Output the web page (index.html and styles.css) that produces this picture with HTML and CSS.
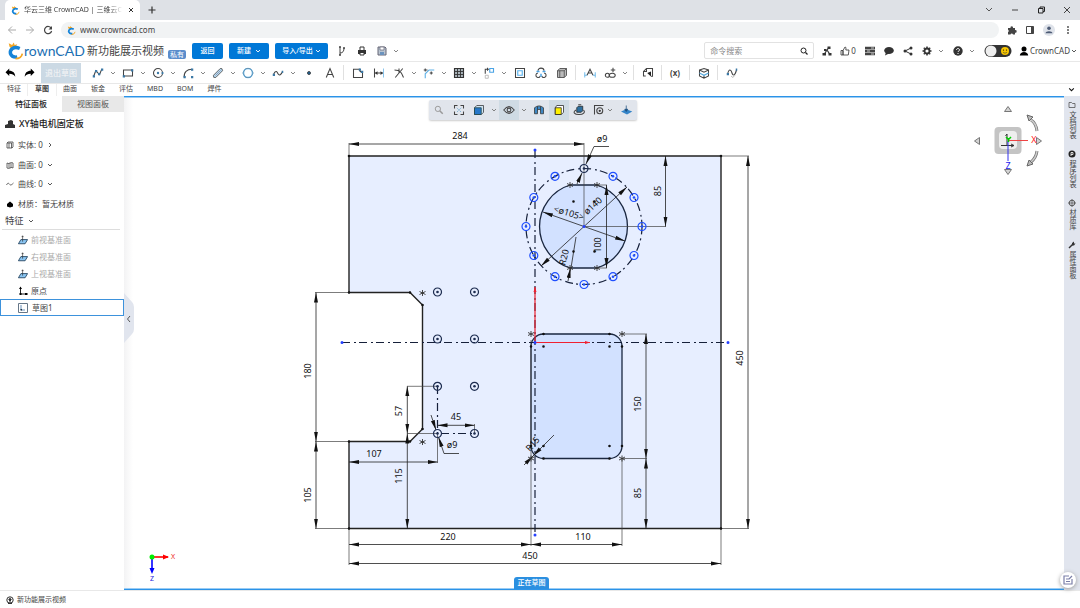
FILE: index.html
```html
<!DOCTYPE html>
<html lang="zh-CN">
<head>
<meta charset="utf-8">
<title>华云三维 CrownCAD</title>
<link rel="stylesheet" href="styles.css">
</head>
<body>
<svg class="defs" aria-hidden="true">
  <symbol id="chev" viewBox="0 0 6 6"><path d="M1 2l2 2 2-2" fill="none" stroke="currentColor" stroke-width=".9"/></symbol>
  <symbol id="brand" viewBox="0 0 20 20"><path d="M3 5L2 1l4 2 2-3 1 3 3-1-2 4-5 1z" fill="#f5a623"/><path d="M15 7C8 4 3 8 4 13q2 5 8 4" fill="none" stroke="#1684d8" stroke-width="4"/><path d="M18 13q-1 6-8 6" fill="none" stroke="#f5a623" stroke-width="2"/></symbol>
  <symbol id="plane" viewBox="0 0 12 12"><path d="M3.500 5.500H11.500L8.500 10.500H.5z" fill="#8ac5f2" stroke="#1d3c58"/><path d="M5.500 8V1M4.500 2.500l1-1.500 1 1.500" fill="none" stroke="#333" stroke-width=".8"/></symbol>
  <symbol id="ring" viewBox="-5 -5 10 10" overflow="visible"><circle r="4" fill="none" stroke="currentColor" stroke-width="1.200"/><circle r="1.300" fill="currentColor"/></symbol>
  <symbol id="star" viewBox="-4 -4 8 8" overflow="visible"><path d="M0-3V3M-3-1.500L3 1.500M-3 1.500L3-1.500" stroke="#333" fill="none" stroke-width=".9"/></symbol>
</svg>

<div class="tabstrip">
  <div class="browser-tab">
    <svg class="fav"><use href="#brand"/></svg>
    <span class="tab-title">华云三维 CrownCAD | 三维云C</span>
    <button class="bare" aria-label="关闭标签页"><svg class="i8" viewBox="0 0 8 8"><path d="M2 2l4 4M6 2L2 6" stroke="#333"/></svg></button>
  </div>
  <button class="bare" aria-label="新标签页"><svg class="i10" viewBox="0 0 10 10"><path d="M5 1.500v7M1.500 5h7" stroke="#333" stroke-width="1.200"/></svg></button>
  <div class="window-controls">
    <button class="bare" aria-label="标签搜索"><svg class="i10" viewBox="0 0 10 10"><path d="M2 3l3 3 3-3" fill="none" stroke="#555"/></svg></button>
    <button class="bare" aria-label="最小化"><svg class="i10" viewBox="0 0 10 10"><path d="M2 5h6" stroke="#444"/></svg></button>
    <button class="bare" aria-label="还原"><svg class="i10" viewBox="0 0 10 10"><path d="M2.500 3.500h4.500v4.500H2.500zM4 3.500V2h4.500v4.500H7" fill="none" stroke="#222"/></svg></button>
    <button class="bare" aria-label="关闭"><svg class="i10" viewBox="0 0 10 10"><path d="M2 2l6 6M8 2L2 8" stroke="#444"/></svg></button>
  </div>
</div>

<div class="address-row">
  <button class="bare" aria-label="后退"><svg class="i10" viewBox="0 0 10 10"><path d="M9 5H1.500M5 1.500L1.500 5 5 8.500" fill="none" stroke="#aaa"/></svg></button>
  <button class="bare" aria-label="前进"><svg class="i10" viewBox="0 0 10 10"><path d="M1 5h7.500M5 1.500L8.500 5 5 8.500" fill="none" stroke="#aaa"/></svg></button>
  <button class="bare" aria-label="刷新"><svg class="i10" viewBox="0 0 10 10"><path d="M8.200 3.200A3.600 3.600 0 1 0 8.600 6" fill="none" stroke="#444" stroke-width="1.200"/><path d="M9 1v3.500H5.500z" fill="#444"/></svg></button>
  <div class="omnibox"><svg class="fav"><use href="#brand"/></svg><input class="url" aria-label="地址" value="www.crowncad.com"></div>
  <div class="browser-actions">
    <button class="bare" aria-label="扩展程序"><svg class="i10" viewBox="0 0 10 10"><path d="M1 3h2.500a1.300 1.300 0 1 1 2.500 0H8v2.200a1.300 1.300 0 1 1 0 2.500V9.500H6a1.300 1.300 0 0 0-2.500 0H1V7a1.200 1.200 0 0 0 0-2.200z" fill="#444"/></svg></button>
    <button class="bare" aria-label="侧边栏"><svg class="i10" viewBox="0 0 10 10"><path d="M1.500 1.500h7v7h-7z" fill="none" stroke="#444"/><path d="M6 1.500h2.500v7H6z" fill="#444"/></svg></button>
    <button class="bare" aria-label="个人资料"><svg class="i12" viewBox="0 0 12 12"><circle cx="6" cy="6" r="6" fill="#dfe3ea"/><circle cx="6" cy="4.300" r="1.800" fill="#4d5b75"/><path d="M2.500 9.300C2.500 6.500 9.500 6.500 9.500 9.300z" fill="#4d5b75"/></svg></button>
    <button class="bare" aria-label="更多"><svg class="i10" viewBox="0 0 10 10"><g fill="#444"><circle cx="5" cy="2" r=".9"/><circle cx="5" cy="5" r=".9"/><circle cx="5" cy="8" r=".9"/></g></svg></button>
  </div>
</div>

<header class="app-header">
  <a class="logo" href="#"><svg class="logo-mark"><use href="#brand"/></svg><span>rownCAD</span></a>
  <h1 class="doc-title">新功能展示视频</h1><span class="badge">私有</span>
  <div class="header-buttons">
    <button class="primary">返回</button>
    <button class="primary second">新建<svg class="chev"><use href="#chev"/></svg></button>
    <button class="primary third">导入/导出<svg class="chev"><use href="#chev"/></svg></button>
  </div>
  <div class="file-tools">
    <button class="bare" aria-label="分支"><svg class="i10" viewBox="0 0 10 10"><path d="M3 1v8M3 7c3 0 4-2 4-5" fill="none" stroke="#444"/><path d="M2 1h2M6 2h2M2 9h2" stroke="#444" stroke-width="1.500"/></svg></button>
    <button class="bare" aria-label="打印"><svg class="i10" viewBox="0 0 10 10"><path d="M3 4V1h4v3" fill="none" stroke="#333"/><path d="M1 4h8v4H1z" fill="#333"/><path d="M3 6.500h4V9H3z" fill="#fff" stroke="#333"/></svg></button>
    <button class="bare with-chev" aria-label="保存"><svg class="i10" viewBox="0 0 10 10"><path d="M1 1h7l1 1v7H1z" fill="#b9c4d0" stroke="#667"/><path d="M3 1h4v3H3z" fill="#fff" stroke="#667" stroke-width=".7"/><path d="M3 6h4v3H3z" fill="#6b93bd"/></svg><svg class="chev"><use href="#chev"/></svg></button>
  </div>
  <div class="search"><input aria-label="命令搜索" placeholder="命令搜索"><svg class="i10" viewBox="0 0 10 10"><circle cx="4.500" cy="4.500" r="2.500" fill="none" stroke="#222"/><path d="M6.500 6.500l2 2" stroke="#222" stroke-width="1.200"/></svg></div>
  <div class="header-tools">
    <button class="bare" aria-label="协作"><svg class="i10" viewBox="0 0 10 10"><path d="M7 1.500L5 4 2 8.500M5 4l3 4.500" fill="none" stroke="#333" stroke-width="1.200"/><path d="M5.500 .5h3v2.500h-3zM.5 7H4v2.500H.5zM6.500 7h3v2.500h-3zM2 3h2.500v2H2z" fill="#333"/></svg></button>
    <button class="bare like"><svg class="i10" viewBox="0 0 10 10"><path d="M3 4.500L5 1c1.300 0 1 1.500.8 3H9L8.300 9H3zM1 4.500h2V9H1z" fill="none" stroke="#333" stroke-width=".8"/></svg>0</button>
    <button class="bare" aria-label="任务"><svg class="i10" viewBox="0 0 10 10"><path d="M0 2h10M0 5h10M0 8h10" stroke="#444" stroke-width="2.400"/><path d="M6 2h3M2 5h3M6 8h3" stroke="#fff" stroke-width=".7"/></svg></button>
    <button class="bare" aria-label="消息"><svg class="i10" viewBox="0 0 10 10"><ellipse cx="5" cy="4.500" rx="4.800" ry="3.600" fill="#333"/><path d="M2 6L1 9.500l4-2z" fill="#333"/></svg></button>
    <button class="bare" aria-label="分享"><svg class="i10" viewBox="0 0 10 10"><path d="M8 2L2 5l6 3" fill="none" stroke="#333"/><g fill="#333"><circle cx="8" cy="2" r="1.500"/><circle cx="2" cy="5" r="1.500"/><circle cx="8" cy="8" r="1.500"/></g></svg></button>
    <button class="bare with-chev" aria-label="设置"><svg class="i10" viewBox="0 0 10 10"><circle cx="5" cy="5" r="2.500" fill="none" stroke="#333" stroke-width="1.800"/><path d="M5 .5v1.500M5 8v1.500M.5 5H2M8 5h1.500M1.800 1.800l1 1M7.200 7.200l1 1M8.200 1.800l-1 1M2.800 7.200l-1 1" stroke="#333" stroke-width="1.500"/></svg><svg class="chev"><use href="#chev"/></svg></button>
    <button class="bare with-chev" aria-label="帮助"><svg class="i10" viewBox="0 0 10 10"><circle cx="5" cy="5" r="4.700" fill="#333"/><path d="M3.500 4c0-2 3-2 3 0 0 1-1.500 1-1.500 2M5 7v1" fill="none" stroke="#fff"/></svg><svg class="chev"><use href="#chev"/></svg></button>
    <label class="switch"><input type="checkbox" aria-label="主题"><svg viewBox="0 0 28 14"><rect x=".5" y="1" width="27" height="12" rx="6" fill="#333"/><circle cx="7" cy="7" r="5.500" fill="#eee"/><circle cx="21" cy="7" r="4" fill="#f6c400"/><circle cx="19.500" cy="6" r=".6"/><circle cx="22.500" cy="6" r=".6"/><path d="M19 8c1 1.500 3 1.500 4 0" stroke="#553" fill="none" stroke-width=".7"/></svg></label>
    <button class="bare account"><svg class="i10" viewBox="0 0 10 10"><circle cx="5" cy="3" r="2.500"/><path d="M.8 9.500C.8 4.800 9.200 4.800 9.200 9.500z"/></svg>CrownCAD<svg class="chev"><use href="#chev"/></svg></button>
  </div>
</header>

<div class="toolbar">
  <button class="tool" aria-label="撤销"><svg viewBox="0 0 16 16"><path d="M2 7l5-5v3c5 0 8 3 8 8-2-3-4-4-8-4v3z"/></svg></button>
  <button class="tool" aria-label="重做"><svg viewBox="0 0 16 16"><path d="M14 7L9 2v3c-5 0-8 3-8 8 2-3 4-4 8-4v3z"/></svg></button>
  <button class="exit">退出草图</button>
  <button class="tool menu" aria-label="直线"><svg viewBox="0 0 16 16"><path d="M2 13L5 5l5 5 3-7" class="ln"/><path d="M1 11h3v3H1zM4 4h3v3H4zM8 8h3v3H8zM12 2h3v3h-3z" class="bl"/></svg><svg class="chev"><use href="#chev"/></svg></button>
  <button class="tool menu" aria-label="矩形"><svg viewBox="0 0 16 16"><path d="M2 4h12v8H2z" class="ln"/><path d="M1 11h3v3H1zM12 3h3v3h-3z" class="bl"/></svg><svg class="chev"><use href="#chev"/></svg></button>
  <button class="tool menu" aria-label="圆"><svg viewBox="0 0 16 16"><circle cx="8" cy="8" r="6" class="ln"/><circle cx="8" cy="8" r="1.600" class="bl"/><circle cx="14" cy="8" r="1.500" class="bl"/></svg><svg class="chev"><use href="#chev"/></svg></button>
  <button class="tool menu" aria-label="圆弧"><svg viewBox="0 0 16 16"><path d="M3 14C2 7 7 3 13 3" class="ln"/><path d="M2 12h3v3H2zM12 2h3v3h-3zM12 12h3v3h-3z" class="bl"/></svg><svg class="chev"><use href="#chev"/></svg></button>
  <button class="tool menu" aria-label="槽"><svg viewBox="0 0 16 16"><path d="M2 11l9-9q3-1 3 3l-9 9q-4 1-3-3z" fill="#b6dcf6" stroke="#555" stroke-width="1.200"/><path d="M4.500 11.500l7-7" stroke="#889"/></svg><svg class="chev"><use href="#chev"/></svg></button>
  <button class="tool menu" aria-label="多边形"><svg viewBox="0 0 16 16"><circle cx="8" cy="8" r="6" fill="none" stroke="#68b8ec" stroke-width="2"/><path d="M5 2h6l4 6-4 6H5L1 8z" fill="none" stroke="#5f7d94" stroke-width=".8"/></svg><svg class="chev"><use href="#chev"/></svg></button>
  <button class="tool menu" aria-label="样条曲线"><svg viewBox="0 0 16 16"><path d="M2 10C5 3 7 7 8 9s4 3 6-3" class="ln"/><path d="M1 9h3v3H1zM13 5h2v3h-2z" class="bl"/></svg><svg class="chev"><use href="#chev"/></svg></button>
  <button class="tool solo" aria-label="点"><svg viewBox="0 0 16 16"><circle cx="8" cy="8" r="2" fill="#256a9f" stroke="#222"/></svg></button>
  <button class="tool solo" aria-label="文字"><svg viewBox="0 0 16 16"><path d="M3 14L8 2l5 12M5 10h6" class="ln"/></svg></button>
  <i class="sep"></i>
  <button class="tool solo" aria-label="轮廓"><svg viewBox="0 0 16 16"><path d="M2 3h8c0 3 1 4 4 4v7H2z" class="ln"/><path d="M9 2h3v3H9zM12 5h3v3h-3z" class="bl"/></svg></button>
  <button class="tool solo" aria-label="尺寸"><svg viewBox="0 0 16 16"><path d="M2 2v12M3 8h10" class="ln"/><path d="M14 2v12" stroke="#61b2e7"/><path d="M10 5.500L13.500 8 10 10.500zM6 5.500L2.500 8 6 10.500z" fill="#333"/></svg></button>
  <button class="tool menu" aria-label="修剪"><svg viewBox="0 0 16 16"><path d="M2 4c8 0 9 3 12 10M13 2L3 14M8 2v6" class="ln"/></svg><svg class="chev"><use href="#chev"/></svg></button>
  <button class="tool menu" aria-label="圆角"><svg viewBox="0 0 16 16"><path d="M3 15V9l5-5h7" fill="none" stroke="#61b2e7" stroke-width="1.500"/><path d="M1 4h5M9 8h4M3 2v4M11 6v4" class="ln"/></svg><svg class="chev"><use href="#chev"/></svg></button>
  <button class="tool menu" aria-label="阵列"><svg viewBox="0 0 16 16"><path d="M2 2h12v12H2z" fill="#aab4bb" stroke="#333" stroke-width="1.500"/><path d="M6 2v12M10 2v12M2 6h12M2 10h12" stroke="#333" stroke-width="1.200"/></svg><svg class="chev"><use href="#chev"/></svg></button>
  <button class="tool menu" aria-label="移动"><svg viewBox="0 0 16 16"><path d="M3 9V3h5M6 1v4" class="ln"/><path d="M9 2h5v5H9z" fill="none" stroke="#4ba4e5" stroke-width="1.500"/><path d="M3 11h4v4H3z" fill="none" stroke="#aaa"/></svg><svg class="chev"><use href="#chev"/></svg></button>
  <button class="tool solo" aria-label="偏移"><svg viewBox="0 0 16 16"><path d="M2 2h12v12H2z" class="ln"/><path d="M5 5h6v6H5z" fill="none" stroke="#58b3ef" stroke-width="1.500"/></svg></button>
  <button class="tool solo" aria-label="转换"><svg viewBox="0 0 16 16"><path d="M4 5a4 3.500 0 0 1 8 0M4 8a3 3 0 1 0 3 4M12 8a3 3 0 1 1-3 4" class="ln"/><path d="M2 6h4M10 6h4M8 9v4" stroke="#4ba4e5" stroke-width="2"/></svg></button>
  <button class="tool solo" aria-label="投影"><svg viewBox="0 0 16 16"><path d="M2 5l3-3h9v9l-3 3H2z" fill="#bbb" stroke="#333"/><path d="M2 5h9v9M11 5l3-3M5 5v9" fill="none" stroke="#444"/></svg></button>
  <i class="sep"></i>
  <button class="tool solo" aria-label="约束"><svg viewBox="0 0 16 16"><path d="M4 11L8 3l4 8M6 8h4" class="ln"/><path d="M1 7v7M15 7v7M1 11h3M12 11h3" stroke="#61b2e7" stroke-width="1.200"/></svg></button>
  <button class="tool menu" aria-label="添加关系"><svg viewBox="0 0 16 16"><circle cx="4.500" cy="11" r="2.700" class="ln"/><ellipse cx="11" cy="11" rx="4" ry="2.700" class="ln"/><path d="M12 1v6M9 4h6" class="ln"/></svg><svg class="chev"><use href="#chev"/></svg></button>
  <i class="sep"></i>
  <button class="tool solo" aria-label="检查"><svg viewBox="0 0 16 16"><path d="M5 12H2V6l4-4h8v11M6 2v4H2M13 13L8 8" class="ln"/><path d="M7 8l5-2v6z" fill="#222"/></svg></button>
  <i class="sep"></i>
  <button class="tool solo formula">(x)</button>
  <i class="sep"></i>
  <button class="tool solo" aria-label="图层"><svg viewBox="0 0 16 16"><path d="M2 4l6-2 6 2v8l-6 3-6-3zM2 4l6 3 6-3M8 11v4" class="ln"/><path d="M2 8l6 3 6-3" fill="none" stroke="#53a9df" stroke-width="1.500"/></svg></button>
  <i class="sep"></i>
  <button class="tool solo" aria-label="曲线编辑"><svg viewBox="0 0 16 16"><path d="M2 10C4 1 7 4 8 8s4 4 6-4" class="ln"/><path d="M1 8h3v3H1zM13 2h2v3h-2z" class="bl"/><path d="M7 12l2 2 3-3" fill="none" stroke="#999"/></svg></button>
</div>

<nav class="ribbon-tabs">
  <button>特征</button><button class="on">草图</button><button>曲面</button><button>钣金</button><button>评估</button><button>MBD</button><button>BOM</button><button>焊件</button>
  <button class="fold" aria-label="折叠"><svg class="chev"><use href="#chev"/></svg></button>
</nav>

<main class="workspace">
  <aside class="side">
    <div class="side-tabs"><button class="on">特征面板</button><button>视图面板</button></div>
    <h2 class="part-name"><svg class="i10" viewBox="0 0 10 10"><path d="M0 9V6l3-1V2l3-1 2 1v3l2 1v3z" fill="#333"/></svg>XY轴电机固定板</h2>
    <ul class="props">
      <li><svg class="i8" viewBox="0 0 8 8"><path d="M1 2l1-1h5v5L6 7H1zM1 2h4.500v5M3 2v5" fill="none" stroke="#444" stroke-width=".8"/></svg>实体: 0<svg class="chev side-chev"><use href="#chev"/></svg></li>
      <li><svg class="i8" viewBox="0 0 8 8"><path d="M1 2q1.500 1 3 0t3 0v5q-1.500-1-3 0T1 7zM3 2v5M5 2v5" fill="none" stroke="#444" stroke-width=".8"/></svg>曲面: 0<svg class="chev"><use href="#chev"/></svg></li>
      <li><svg class="i8" viewBox="0 0 8 8"><path d="M.5 5c2-4 3 0 4 0s2-1 3-2" fill="none" stroke="#444" stroke-width=".8"/></svg>曲线: 0<svg class="chev"><use href="#chev"/></svg></li>
      <li><svg class="i8" viewBox="0 0 8 8"><path d="M1 4L4 1.500 7 4v2.500L4 7.500 1 6.500z"/></svg>材质：暂无材质</li>
    </ul>
    <h3 class="tree-head">特征<svg class="chev"><use href="#chev"/></svg></h3>
    <ul class="tree">
      <li class="dim"><svg class="i10"><use href="#plane"/></svg>前视基准面</li>
      <li class="dim"><svg class="i10"><use href="#plane"/></svg>右视基准面</li>
      <li class="dim"><svg class="i10"><use href="#plane"/></svg>上视基准面</li>
      <li><svg class="i10" viewBox="0 0 10 10"><path d="M2.500 2v6h6" fill="none" stroke="#222"/><path d="M1 3l1.500-2.500L4 3zM1.500 7h2v2h-2zM7 7h2.500v2H7z"/></svg>原点</li>
      <li class="sel"><svg class="i10" viewBox="0 0 10 10"><path d="M.5.500h9v9h-9z" fill="#fff" stroke="#678"/><path d="M3 2v5h4" fill="none" stroke="#47a" stroke-width=".8"/><path d="M2.500 6h1.500v1.500H2.500z" fill="#234"/></svg>草图1</li>
    </ul>
  </aside>

  <section class="canvas">
    <svg class="sketch" viewBox="124 97 940 492">
      <defs>
        <marker id="arr" markerUnits="userSpaceOnUse" markerWidth="10" markerHeight="6" refX="10" refY="3" orient="auto-start-reverse"><path d="M0 1L10 3 0 5z" fill="#111"/></marker>
        <marker id="arrRed" markerUnits="userSpaceOnUse" markerWidth="6" markerHeight="4" refX="5" refY="2" orient="auto"><path d="M0 .5L5 2 0 3.500z" fill="#f02030"/></marker>
      </defs>
      <path class="plate" d="M349 156H721V528.500H349V441.500H410L422.500 429V305L410 292.500H349z"/>
      <path class="pocket" d="M570 185H597A43.500 43.500 0 0 1 597 268H570A43.500 43.500 0 0 1 570 185z"/>
      <rect class="pocket" x="531" y="334" width="91" height="124.500" rx="12.400"/>
      <g class="ext">
        <path d="M349 143V156M584 143V226.500M584 226.500H666M721 156H749M721 528.500H749M315 292.500H349M315 441.500H349M315 528.500H349M407 386.300H437M407 433.500H437M474.500 424V433M437.500 433V463M531 458V546M622 458V546M349 528V565M721 528V565M622 334H647M622 458.500H647M597 185H607M597 268H607M531 340V458"/>
      </g>
      <g class="axis">
        <path d="M342 342.500H728M535 150V535M437.500 386V433.500H474.500"/>
        <circle cx="584" cy="226.500" r="58"/>
      </g>
      <g class="dims">
        <path d="M349 144H584"/><path d="M665.500 156V226.500"/><path d="M748 156V528.500"/><path d="M316 292.500V441.500"/><path d="M316 441.500V528.500"/><path d="M407.300 386.300V433.500"/><path d="M407.300 433.500V528.500"/><path d="M437.500 425.300H474.500"/><path d="M349 462H437.500"/><path d="M349 544.500H531"/><path d="M531 544.500H622"/><path d="M349 563.500H721"/><path d="M646 334V458.500"/><path d="M646 458.500V528.500"/><path d="M541 266L627 187"/><path d="M543 212L625 241"/><path d="M606.500 185V268"/>
      </g>
      <g class="leaders">
        <path d="M609 146.500H594L586 164"/><path d="M577 184L582 173"/><path d="M459 453.500H444L438.500 437"/><path d="M431 415L436 430"/><path d="M576 237L571 268M568 281L570.500 268"/><path d="M554 435L533 456"/><path d="M524 465L533 456"/>
      </g>
      <g class="red"><path d="M535 342V287"/><path d="M535 342.500H590"/></g>
      <g color="#1f4fff">
        <use href="#ring" x="637" y="221.500" width="10" height="10"/><use href="#ring" x="629" y="192.500" width="10" height="10"/><use href="#ring" x="608" y="171.300" width="10" height="10"/><use href="#ring" x="550" y="171.300" width="10" height="10"/><use href="#ring" x="528.800" y="192.500" width="10" height="10"/><use href="#ring" x="521" y="221.500" width="10" height="10"/><use href="#ring" x="528.800" y="250.500" width="10" height="10"/><use href="#ring" x="550" y="271.700" width="10" height="10"/><use href="#ring" x="579" y="279.500" width="10" height="10"/><use href="#ring" x="608" y="271.700" width="10" height="10"/><use href="#ring" x="629" y="250.500" width="10" height="10"/>
      </g>
      <g color="#1d2c50">
        <use href="#ring" x="579" y="163.500" width="10" height="10"/>
        <use href="#ring" x="432.500" y="287" width="10" height="10"/><use href="#ring" x="469.500" y="287" width="10" height="10"/><use href="#ring" x="432.500" y="334" width="10" height="10"/><use href="#ring" x="469.500" y="334" width="10" height="10"/><use href="#ring" x="432.500" y="381.300" width="10" height="10"/><use href="#ring" x="469.500" y="381.300" width="10" height="10"/><use href="#ring" x="432.500" y="428.500" width="10" height="10"/><use href="#ring" x="469.500" y="428.500" width="10" height="10"/>
      </g>
      <use href="#star" x="418.500" y="289" width="8" height="8"/><use href="#star" x="418.500" y="438" width="8" height="8"/><use href="#star" x="527" y="330" width="8" height="8"/><use href="#star" x="618" y="330" width="8" height="8"/><use href="#star" x="618" y="454.500" width="8" height="8"/><use href="#star" x="527" y="454.500" width="8" height="8"/><use href="#star" x="566" y="181" width="8" height="8"/><use href="#star" x="593" y="181" width="8" height="8"/><use href="#star" x="566" y="264" width="8" height="8"/><use href="#star" x="593" y="264" width="8" height="8"/>
      <path class="dots" d="M349 156h0M721 156h0M721 528.500h0M349 528.500h0M349 441.500h0M349 292.500h0M410 292.500h0M422.500 305h0M422.500 429h0M410 441.500h0M407.500 441.500h0M573.500 201.500h0M594.500 201.500h0M573.500 251.500h0M594.500 251.500h0M543.500 334h0M609.500 334h0M531 346.500h0M543.500 346.500h0M609.500 346.500h0M622 346.500h0M543.500 446h0M609.500 446h0M622 446h0M531 446h0M543.500 458.500h0M609.500 458.500h0"/>
      <path class="blue-dots" d="M342 342.500h0M728 342.500h0M535 150h0M535 535h0M535 342.500h0M584 226.500h0"/>
      <g class="labels">
        <text x="460" y="139">284</text><text x="602" y="142">ø9</text><text x="374" y="457">107</text><text x="448" y="540">220</text><text x="583" y="540">110</text><text x="530" y="559">450</text><text x="456" y="420">45</text><text x="452" y="448">ø9</text>
        <text transform="translate(661 191) rotate(-90)">85</text><text transform="translate(743 358) rotate(-90)">450</text><text transform="translate(311 371) rotate(-90)">180</text><text transform="translate(311 495) rotate(-90)">105</text><text transform="translate(402 411) rotate(-90)">57</text><text transform="translate(402 476) rotate(-90)">115</text><text transform="translate(641 404) rotate(-90)">150</text><text transform="translate(641 493) rotate(-90)">85</text><text transform="translate(601 245) rotate(-90)">100</text>
        <text transform="translate(595 208) rotate(-43)">ø140</text><text transform="translate(568 216) rotate(17)">&lt;ø105&gt;</text><text transform="translate(567 258) rotate(-75)">R20</text><text transform="translate(535 446) rotate(-48)">R15</text>
      </g>
      <g class="triad"><path d="M152 557H168" stroke="#f00" stroke-width="1.600"/><path d="M163 554.500l6 2.500-6 2.500z" fill="#f00"/><path d="M152 557V570" stroke="#00f" stroke-width="1.600"/><path d="M149.500 568h5l-2.500 6z" fill="#00f"/><circle cx="152" cy="557" r="2.500" fill="#0e0"/><text x="173" y="559" fill="#e22">X</text><text x="152" y="581" fill="#22d">Z</text></g>
    </svg>

    <div class="view-tools">
      <button class="tool" aria-label="缩放"><svg viewBox="0 0 16 16"><circle cx="6.500" cy="6.500" r="3.500" fill="none" stroke="#999" stroke-width="1.300"/><path d="M9 9l4 4" stroke="#999" stroke-width="2"/></svg></button>
      <button class="tool" aria-label="适应窗口"><svg viewBox="0 0 16 16"><path d="M2 6V2h4M10 2h4v4M14 10v4h-4M6 14H2v-4" class="ln"/><path d="M5 5l6 6M11 5l-6 6" stroke="#64a5cf" stroke-dasharray="2 1"/></svg></button>
      <button class="tool menu" aria-label="显示样式"><svg viewBox="0 0 16 16"><path d="M2 5l3-3h9v9l-3 3H2z" fill="#cfe3f3" stroke="#333"/><path d="M2 5h9v9H2z" fill="#2778c9" stroke="#244"/></svg><svg class="chev"><use href="#chev"/></svg></button>
      <button class="tool menu lit" aria-label="可见性"><svg viewBox="0 0 16 16"><path d="M1 8q7-9 14 0-7 9-14 0z" class="ln"/><circle cx="8" cy="8" r="2.500" class="ln"/></svg><svg class="chev"><use href="#chev"/></svg></button>
      <button class="tool" aria-label="剖切"><svg viewBox="0 0 16 16"><path d="M2 13V5q6-5 12 0v8h-4V8q-2-2-4 0v5z" fill="#3e87c3" stroke="#333"/><path d="M6 8V3M10 8V3" stroke="#333"/></svg></button>
      <button class="tool lit-all" aria-label="着色"><svg viewBox="0 0 16 16"><path d="M3 5l2-3h9v9l-3 3H3z" fill="#fff" stroke="#222"/><path d="M3 5h8v9H3z" fill="#fff200" stroke="#222"/></svg></button>
      <button class="tool" aria-label="旋转视图"><svg viewBox="0 0 16 16"><path d="M5 5l2-2h6v6l-2 2H5z" fill="#2d6f9f" stroke="#222"/><path d="M4 8c-5 3-2 6 4 6s9-3 6-6M7 1h4" class="ln"/></svg></button>
      <button class="tool menu tight" aria-label="测量"><svg viewBox="0 0 16 16"><path d="M2 14V2h12" class="ln"/><circle cx="9" cy="9" r="4" class="ln"/><circle cx="9" cy="9" r="1.500" fill="#333"/></svg><svg class="chev"><use href="#chev"/></svg></button>
      <button class="tool" aria-label="正视于"><svg viewBox="0 0 16 16"><path d="M0 10l7-3 8 3-7 4z" fill="#3484c8"/><path d="M7 2v7M5 7l2 3 2-3z" fill="#1d4f7e" stroke="#1d4f7e"/></svg></button>
    </div>

    <svg class="view-cube" viewBox="972 103 74 74">
      <rect x="994.500" y="127" width="27" height="27" rx="4" fill="#c4c4c4"/><rect x="999" y="131" width="18" height="18" rx="4" fill="#eee"/>
      <g fill="#d4d4d4" stroke="#777"><path d="M1004.500 111.500h7l-3.500-5z"/><path d="M1004.500 169.500h7l-3.500 5z"/><path d="M979.500 137.500v7l-5-3.500z"/><path d="M1036.500 137.500v7l5-3.500z"/></g>
      <path d="M1037 131Q1036 123 1031 120" fill="none" stroke="#777" stroke-width="3"/><path d="M1037 131Q1036 123 1031 120" fill="none" stroke="#ccc" stroke-width="1.500"/><path d="M1027 115l6 2-4 4z" fill="#bbb" stroke="#666"/>
      <path d="M1037 151Q1036 158 1031 162" fill="none" stroke="#777" stroke-width="3"/><path d="M1037 151Q1036 158 1031 162" fill="none" stroke="#ccc" stroke-width="1.500"/><path d="M1027 166l2-6 4 4z" fill="#bbb" stroke="#666"/>
      <path d="M1001 145.500H1014M1007 145V134M1011 144l3 1.500-3 1.500M1005.500 136l1.500-2" fill="none" stroke="#333"/>
      <path d="M1008 140.500H1028" stroke="#e44"/><path d="M1008 141V161" stroke="#33e"/><path d="M1006 137l2.500 2.500 2.500-2.500M1008.500 139v3" fill="none" stroke="#0c0" stroke-width="1.500"/>
      <text x="1034" y="143" fill="#f22">X</text><text x="1008" y="169" fill="#22e">Z</text>
    </svg>
    <button class="collapse" aria-label="收起面板"><svg viewBox="0 0 10 50"><path d="M0 0l8 9q2 2 2 5v22q0 3-2 5l-8 9z" fill="#e1e5ee"/><path d="M6 23l-2.500 3L6 29" fill="none" stroke="#555"/></svg></button>
    <span class="mode">正在草图</span>
  </section>

  <aside class="rail">
    <button><svg class="i8" viewBox="0 0 8 8"><path d="M1 1.500h2.500l1 1H7v4H1z" fill="none" stroke="#555" stroke-width=".8"/></svg><span>文档列表</span></button>
    <button><svg class="i8" viewBox="0 0 8 8"><circle cx="4" cy="4" r="3.500" fill="#222"/><path d="M3 6V2.500h2v2H3" fill="none" stroke="#fff" stroke-width=".8"/></svg><span>程序列表</span></button>
    <button><svg class="i8" viewBox="0 0 8 8"><circle cx="4" cy="4" r="2.800" fill="none" stroke="#555"/><path d="M0 4h8M4 0v8" stroke="#555" stroke-width=".8"/></svg><span>材质库</span></button>
    <button><svg class="i8" viewBox="0 0 8 8"><path d="M1 7l4-4" stroke="#333" stroke-width="1.500"/><path d="M4 2l2-1.500v2h1.500L6 4.500H4z" fill="#333"/></svg><span>属性面板</span></button>
    <button class="note" aria-label="反馈"><svg class="i10" viewBox="0 0 10 10"><path d="M6 1H1v8h8V4M3 4h3M3 6.500h4M6 4l3-3" fill="none" stroke="#7b7fa8" stroke-width="1.200"/></svg></button>
  </aside>
</main>

<footer class="status"><svg class="i8" viewBox="0 0 8 8"><circle cx="4" cy="4" r="3.200" fill="none" stroke="#333"/><path d="M4 1.500L6 4H5v1.500H3V4H2z" fill="#333"/><path d="M2 6.500h4V8H2z" fill="#333"/></svg>新功能展示视频</footer>
</body>
</html>
```
FILE: styles.css
```css
* { box-sizing: border-box; }
body {
  margin: 0;
  height: 100vh;
  display: grid;
  grid-template-rows: 20px 20px 22px 22px 12px minmax(0, 1fr) 18px;
  overflow: hidden;
  background: #fff;
  color: #444;
  font: 8px/12px "Noto Sans", "Noto Sans CJK SC", sans-serif;
}
h1, h2, h3, ul { margin: 0; padding: 0; font-weight: 400; list-style: none; }
button, input { font: inherit; color: inherit; border: 0; padding: 0; background: none; }
svg { display: block; flex: none; }
.defs { position: absolute; width: 0; height: 0; }
.i8 { width: 8px; height: 8px; }
.i10 { width: 10px; height: 10px; }
.i12 { width: 12px; height: 12px; }
.fav { width: 9px; height: 9px; }
.chev { width: 6px; height: 6px; }
.bare { display: flex; align-items: center; justify-content: center; }

/* browser frame */
.tabstrip { display: flex; align-items: center; gap: 7px; background: #dee1e6; padding-left: 5px; }
.browser-tab { align-self: stretch; display: flex; align-items: center; gap: 4px; width: 135px; padding: 0 5px 0 6px; background: #fff; border-radius: 5px 5px 0 0; }
.tab-title { flex: 1; white-space: nowrap; font-size: 7px; mask-image: linear-gradient(90deg, #000 85%, transparent); }
.window-controls { margin-left: auto; display: flex; gap: 16px; padding-right: 8px; }
.address-row { display: flex; align-items: center; gap: 8px; padding-left: 7px; }
.omnibox { flex: 1; display: flex; align-items: center; gap: 4px; height: 16px; padding-left: 6px; border-radius: 8px; background: #f1f3f4; }
.url { flex: 1; min-width: 0; line-height: 14px; }
.browser-actions { display: flex; align-items: center; gap: 8px; padding-right: 7px; }

/* application header */
.app-header { display: flex; align-items: center; border-bottom: 1px solid #e8e8e8; padding-left: 7px; }
.logo { display: flex; align-items: center; color: #1b6fb3; text-decoration: none; font: 14px/20px Lato, sans-serif; width: 80px; }
.logo-mark { width: 17px; height: 18px; }
.doc-title { font-size: 11px; line-height: 20px; white-space: nowrap; color: #444; }
.badge { align-self: flex-end; margin: 0 6px 2px 4px; padding: 0 2px; border-radius: 2px; background: #5a8dcc; color: #fff; font-size: 7px; line-height: 9px; white-space: nowrap; }
.header-buttons { display: flex; gap: 6px; }
.primary { display: flex; align-items: center; justify-content: center; gap: 4px; height: 16px; width: 31px; border-radius: 2px; background: #0078d7; color: #fff; font-size: 7px; font-weight: 500; white-space: nowrap; }
.primary.second { width: 40px; }
.primary.third { width: 53px; gap: 2px; }
.file-tools { display: flex; gap: 10px; margin-left: 9px; }
.with-chev { gap: 6px; }
.with-chev .chev { color: #777; }
.search { display: flex; align-items: center; width: 110px; height: 17px; margin-left: auto; padding: 0 4px 0 5px; border: 1px solid #e2e2e2; border-radius: 2px; }
.search input { flex: 1; min-width: 0; }
.search input::placeholder { color: #888; opacity: 1; }
.header-tools { display: flex; align-items: center; gap: 9px; padding: 0 3px 0 8px; }
.like { gap: 1px; margin-left: -1px; }
.switch { position: relative; }
.switch input { position: absolute; opacity: 0; margin: 0; }
.switch svg { width: 28px; height: 14px; }
.account { gap: 1px; margin-left: -2px; color: #444; }

/* sketch tools */
.toolbar { display: flex; align-items: center; border-bottom: 1px solid #e8e8e8; }
.tool { display: flex; align-items: center; justify-content: flex-start; width: 20px; height: 20px; padding-left: 4px; }
.tool > svg:first-child { width: 12px; height: 12px; }
.tool .chev { margin-left: 6px; color: #777; }
.menu { width: 30px; }
.solo { width: 21px; padding-left: 5px; }
.ln { fill: none; stroke: #444; stroke-width: 1.4; }
.bl { fill: #3b78a5; }
.exit { width: 40px; height: 20px; margin: 0 7px 0 1px; background: #cbd9e4; color: #f7f7f7; }
.sep { width: 1px; height: 15px; margin: 0 3px; background: #e0e0e0; }
.formula { font-weight: 700; }
.ribbon-tabs { display: flex; align-items: flex-start; font-size: 7px; }
.ribbon-tabs button { height: 12px; padding: 0 7px 2px; line-height: 10px; white-space: nowrap; }
.ribbon-tabs .on { font-weight: 700; box-shadow: -1px 0 #eee, 1px 0 #eee; }
.ribbon-tabs .fold { margin-left: auto; padding-right: 5px; color: #111; }
.fold .chev { width: 7px; height: 7px; }

/* workspace */
.workspace { display: grid; grid-template-columns: 124px minmax(0, 1fr) 16px; min-height: 0; }
.side { background: #fff; }
.side-tabs { display: grid; grid-template-columns: 1fr 1fr; }
.side-tabs button { height: 16px; background: #e8e8e8; color: #555; }
.side-tabs .on { background: #fff; color: #222; font-weight: 500; }
.part-name { display: flex; align-items: center; gap: 4px; height: 23px; padding-left: 5px; font-size: 9px; font-weight: 500; color: #222; }
.props { display: grid; grid-template-rows: 20px 19px 20px 19px; }
.props li { display: flex; align-items: center; gap: 4px; padding-left: 6px; }
.side-chev { transform: rotate(-90deg); }
.tree-head { display: flex; align-items: center; gap: 4px; height: 17px; margin: 0 4px 0 2px; padding-left: 3px; border-bottom: 1px solid #ddd; }
.tree { padding-top: 1px; }
.tree li { display: flex; align-items: center; gap: 3px; height: 17px; padding-left: 18px; }
.tree .dim { color: #aaa; }
.tree .sel { padding-left: 17px; border: 1px solid #3d92dc; gap: 4px; }
.canvas { position: relative; min-width: 0; border-top: 1px solid #2b93e8; border-bottom: 1px solid #2b93e8; background: linear-gradient(90deg, #f3f3f4, #fff 9px); box-shadow: inset 0 1px #9accf4, inset 0 -1px #9accf4; }
.sketch { width: 100%; height: 100%; }
.plate { fill: #e7eeff; stroke: #222; stroke-width: 1.4; }
.pocket { fill: #d2e1ff; stroke: #1a2740; stroke-width: 1.3; }
.ext path { fill: none; stroke: #444; stroke-width: .7; }
.axis { fill: none; stroke: #16203a; stroke-width: 1.2; stroke-dasharray: 8 4 2 3; }
.dims path { fill: none; stroke: #222; stroke-width: .8; marker-start: url(#arr); marker-end: url(#arr); }
.leaders path { fill: none; stroke: #222; stroke-width: .8; marker-end: url(#arr); }
.red path { fill: none; stroke: #f02030; stroke-width: 1.2; marker-end: url(#arrRed); }
.dots { stroke: #111; stroke-width: 2.6; stroke-linecap: round; }
.blue-dots { stroke: #2440ff; stroke-width: 3; stroke-linecap: round; }
.labels { font-size: 9px; fill: #111; text-anchor: middle; }
.triad, .view-cube { text-anchor: middle; font-size: 7px; }
.view-cube { position: absolute; top: 6px; right: 18px; width: 74px; height: 74px; font-size: 9px; }
.view-tools { position: absolute; top: 3px; left: 32.4%; display: flex; background: #e1e5ec; border-radius: 2px; box-shadow: 0 1px 2px #ccc; }
.view-tools .lit { background: linear-gradient(90deg, #cfdbe4 20px, transparent 20px); }
.view-tools .lit-all { background: #cfdbe4; }
.view-tools .tight { width: 28px; }
.view-tools .tight .chev { margin-left: 2px; }
.collapse { position: absolute; left: 0; top: 196px; width: 10px; }
.collapse svg { width: 10px; height: 50px; }
.mode { position: absolute; left: 390px; bottom: 0; width: 35px; border-radius: 3px 3px 0 0; background: #2b8fe0; color: #fff; font-size: 7px; font-weight: 500; line-height: 12px; text-align: center; }
.rail { position: relative; display: flex; flex-direction: column; align-items: center; gap: 11px; padding-top: 5px; background: #e1e5ee; }
.rail button { display: flex; flex-direction: column; align-items: center; gap: 2px; }
.rail span { writing-mode: vertical-rl; font-size: 7px; line-height: 10px; }
.rail .note { position: absolute; right: 4px; bottom: 2px; width: 16px; height: 16px; justify-content: center; border-radius: 50%; background: #fff; box-shadow: 0 1px 4px #999; }
.status { display: flex; align-items: center; gap: 3px; padding-left: 6px; font-size: 7px; border-top: 1px solid #e8e8e8; }
```
